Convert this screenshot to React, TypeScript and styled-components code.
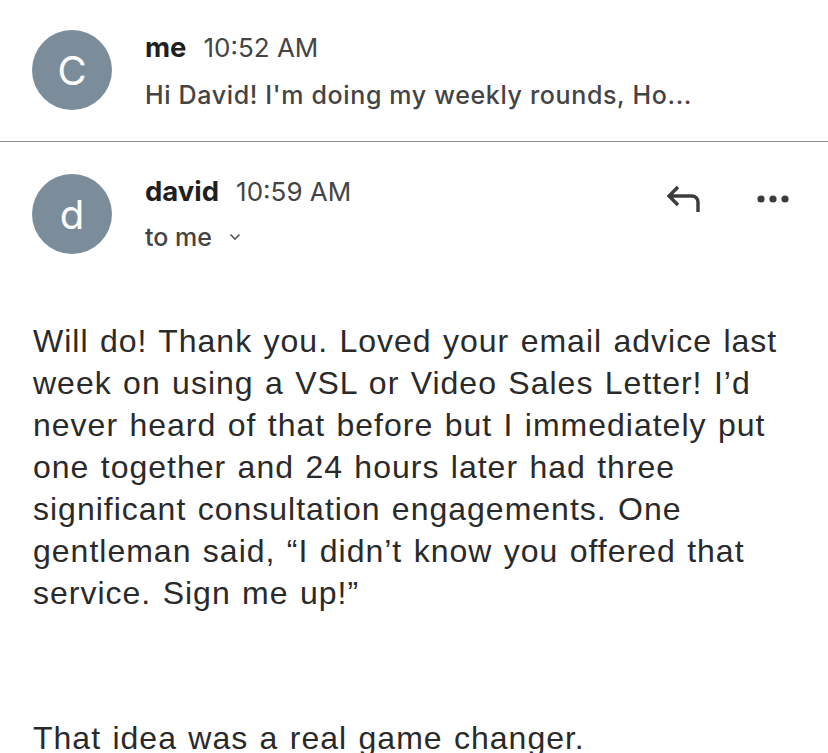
import React from "react";
import styled, { createGlobalStyle } from "styled-components";

const Global = createGlobalStyle`
  html, body { margin: 0; padding: 0; background: #fff; }
  body { font-family: Inter, Roboto, "Noto Sans", sans-serif; }
`;

const Page = styled.div`
  width: 828px;
  height: 753px;
  overflow: hidden;
  background: #fff;
`;

const Row = styled.div<{ $pt: number; $pb: number }>`
  display: flex;
  align-items: flex-start;
  padding: ${(p) => p.$pt}px 38px ${(p) => p.$pb}px 32px;
`;

const Avatar = styled.div`
  width: 80px;
  height: 80px;
  border-radius: 50%;
  background: #7b8c9a;
  color: #fff;
  display: flex;
  align-items: center;
  justify-content: center;
  font-family: Inter, Roboto, sans-serif;
  font-size: 40px;
  font-weight: 400;
  flex-shrink: 0;
`;

const Info = styled.div`
  margin-left: 33px;
  flex: 1;
  display: flex;
  flex-direction: column;
`;

const NameLine = styled.div`
  display: flex;
  align-items: baseline;
  gap: 17px;
  height: 34px;
  line-height: 34px;
`;

const Name = styled.span`
  font-size: 27.5px;
  font-weight: 700;
  color: #1f1f1f;
`;

const Time = styled.span`
  font-size: 26px;
  font-weight: 400;
  color: #444;
`;

const Snippet = styled.div`
  margin-top: 14px;
  height: 34px;
  line-height: 34px;
  font-size: 25px;
  font-weight: 500;
  letter-spacing: 0.65px;
  color: #444;
  white-space: nowrap;
`;

const ToLine = styled.div`
  margin-top: 12px;
  height: 34px;
  display: flex;
  align-items: center;
  gap: 17px;
  font-size: 25px;
  font-weight: 500;
  color: #444;
`;

const Divider = styled.hr`
  margin: 0;
  border: none;
  border-top: 1px solid #8c8c8c;
`;

const Actions = styled.div`
  display: flex;
  align-items: center;
  gap: 54px;
  margin-top: 10px;
`;

const Body = styled.div`
  padding: 66px 30px 0 33px;
  font-family: "Liberation Sans", Arial, sans-serif;
  font-size: 32px;
  letter-spacing: 1px;
  word-spacing: 1.5px;
  line-height: 42px;
  color: #2a2a2a;
`;

const Para = styled.p<{ $mt: number }>`
  margin: ${(p) => p.$mt}px 0 0 0;
`;

const ReplyIcon = () => (
  <svg width="36" height="30" viewBox="0 0 36 30" fill="none">
    <path
      d="M12 3 L3 12 L12 21 M3 12 H26 a6 6 0 0 1 6 6 V28"
      stroke="#3c3c3c"
      strokeWidth="3.4"
      strokeLinecap="butt"
      strokeLinejoin="miter"
    />
  </svg>
);

const MoreIcon = () => (
  <svg width="34" height="10" viewBox="0 0 34 10">
    <circle cx="5" cy="5" r="3.6" fill="#3c3c3c" />
    <circle cx="17" cy="5" r="3.6" fill="#3c3c3c" />
    <circle cx="29" cy="5" r="3.6" fill="#3c3c3c" />
  </svg>
);

const Chevron = () => (
  <svg width="12" height="8" viewBox="0 0 12 8" fill="none">
    <path d="M1.5 1.5 L6 6 L10.5 1.5" stroke="#555" strokeWidth="1.6" />
  </svg>
);

export default function App() {
  return (
    <Page>
      <Global />
      <Row $pt={30} $pb={29}>
        <Avatar>C</Avatar>
        <Info>
          <NameLine>
            <Name>me</Name>
            <Time>10:52 AM</Time>
          </NameLine>
          <Snippet>Hi David! I'm doing my weekly rounds, Ho...</Snippet>
        </Info>
      </Row>
      <Divider />
      <Row $pt={32} $pb={0}>
        <Avatar>d</Avatar>
        <Info>
          <NameLine>
            <Name>david</Name>
            <Time>10:59 AM</Time>
          </NameLine>
          <ToLine>
            to me <Chevron />
          </ToLine>
        </Info>
        <Actions>
          <ReplyIcon />
          <MoreIcon />
        </Actions>
      </Row>
      <Body>
        <Para $mt={0}>
          Will do! Thank you. Loved your email advice last week on using a VSL
          or Video Sales Letter! I’d never heard of that before but I
          immediately put one together and 24 hours later had three
          significant consultation engagements. One gentleman said, “I didn’t
          know you offered that service. Sign me up!”
        </Para>
        <Para $mt={103}>That idea was a real game changer.</Para>
      </Body>
    </Page>
  );
}
